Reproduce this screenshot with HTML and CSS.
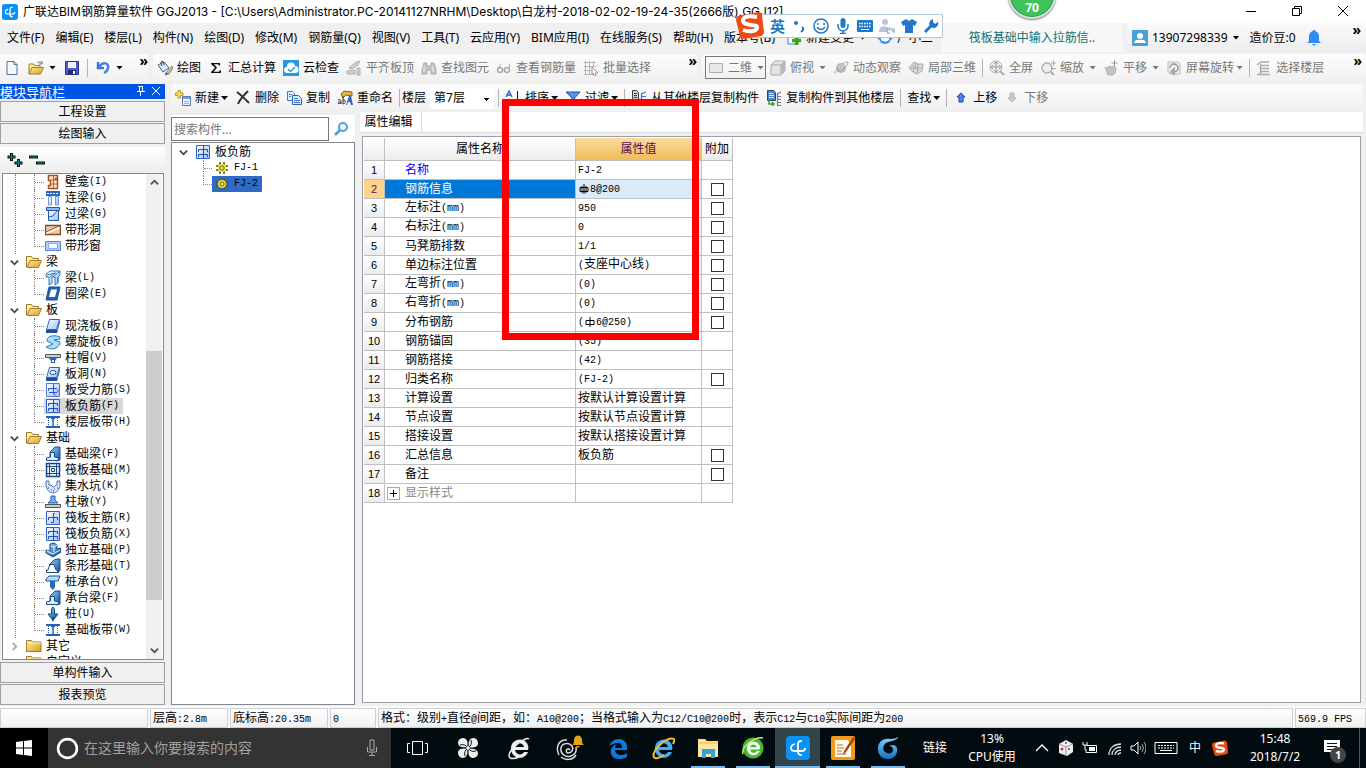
FILE: index.html
```html
<!DOCTYPE html>
<html lang="zh-CN">
<head>
<meta charset="utf-8">
<title>广联达BIM钢筋算量软件 GGJ2013</title>
<link rel="stylesheet" href="styles.css">
</head>
<body>
<svg class="defs" aria-hidden="true">
  <defs>
    <linearGradient id="gold" x1="0" y1="0" x2="1" y2="1"><stop offset="0" stop-color="#fff0a0"/><stop offset="1" stop-color="#d89a20"/></linearGradient>
    <linearGradient id="sky" x1="0" y1="0" x2="1" y2="1"><stop offset="0" stop-color="#ffffff"/><stop offset="1" stop-color="#9dc0ff"/></linearGradient>
    <linearGradient id="steel" x1="0" y1="0" x2="1" y2="1"><stop offset="0" stop-color="#9ed6f8"/><stop offset="1" stop-color="#0d4a96"/></linearGradient>
    <linearGradient id="ie" x1="0" y1="0" x2="0" y2="1"><stop offset="0" stop-color="#7fd2fb"/><stop offset="1" stop-color="#1273c4"/></linearGradient>
  </defs>
  <symbol id="app" viewBox="0 0 24 24"><rect width="24" height="24" rx="4" fill="#0a91f5"/><path d="M16 5h-1q-3 0-3 3v8q0 3 4 3M9 8q-4 1-4 4t4 3h7q3 0 3-3" fill="none" stroke="#fff" stroke-width="1.800"/></symbol>
  <symbol id="new" viewBox="0 0 16 16"><path d="M3 1.500h7l3 3v10H3z" fill="#f4f9ff" stroke="#53719c"/><path d="M10 1.500v3h3" fill="#c5d8ef" stroke="#53719c"/></symbol>
  <symbol id="open" viewBox="0 0 16 16"><path d="M1 14V4h5l1 1.500h5V8" fill="#ffe9a0" stroke="#a47a27"/><path d="M1 14 4 7.500h11.500L12.500 14z" fill="url(#gold)" stroke="#a47a27"/><path d="M9 3c2-2 4-1 5 1m0-3v3h-3" fill="none" stroke="#52739f"/></symbol>
  <symbol id="save" viewBox="0 0 16 16"><path d="M1.500 1.500h13v13h-13z" fill="#4b5fd0" stroke="#26328c"/><path d="M4 2h8v6H4z" fill="#f0f3ff"/><path d="M4 10h8v4.500H4z" fill="#222c6e"/><path d="M9 11h2v3H9z" fill="#fff"/></symbol>
  <symbol id="undo" viewBox="0 0 16 16"><path d="M3 2v6h6" fill="none" stroke="#3f76d6" stroke-width="2.500"/><path d="M4 7c4-6 10-4 9 1-.500 2.500-2 4-4 5" fill="none" stroke="#4b80df" stroke-width="2.500"/></symbol>
  <symbol id="paint" viewBox="0 0 16 16"><path d="M1 5 7 2l5 6-6 4z" fill="#dbe9fb" stroke="#415f88"/><path d="M5 6c-3-5 2-7 2-1" fill="none" stroke="#333"/><path d="m15 6-5 6-2 3 4-1 4-6z" fill="#e7bf58" stroke="#5b6d8e" stroke-width=".8"/><path d="m8 15 1-3 2 2z" fill="#2962b8"/></symbol>
  <symbol id="sigma" viewBox="0 0 16 16"><path d="M3 3h9v2.500h-1L10 4.200H6l3 3.500-3.500 4H11l1-1.500h1V13H3v-1l4-4.300L3 4z" fill="#111"/></symbol>
  <symbol id="cloudcheck" viewBox="0 0 16 16"><rect width="16" height="16" fill="#249ae4"/><path d="M4 13a3 3 0 0 1 0-6 4 4 0 0 1 8-1 3.500 3.500 0 0 1 0 7z" fill="#fff"/><path d="m5 9 2.500 2.500L12 7" fill="none" stroke="#249ae4" stroke-width="1.500"/></symbol>
  <symbol id="slab" viewBox="0 0 16 16"><path d="m3 8 7-6 4-1-2 4-6 4zM1 11l8-1v4H1zM11 8h3v7h-3z" fill="#cfcfcf" stroke="#b0b0b0"/></symbol>
  <symbol id="binoc" viewBox="0 0 16 16"><path d="M3 3h3v3h4V3h3l2 7v4h-5v-4H6v4H1v-4z" fill="#c6c6c6" stroke="#a9a9a9"/><path d="M3 6v6M12 6v6" stroke="#eee"/></symbol>
  <symbol id="glasses" viewBox="0 0 16 16"><circle cx="4" cy="10" r="2.500" fill="none" stroke="#aaa" stroke-width="1.500"/><circle cx="11" cy="10" r="2.500" fill="none" stroke="#aaa" stroke-width="1.500"/><path d="M1.500 10 5 4m8.500 6V4M6 10h3" fill="none" stroke="#aaa"/></symbol>
  <symbol id="batch" viewBox="0 0 16 16"><path d="M1 2.500h12M1 6.500h12M1 10.500h7M1 14.500h7M2.500 1v14M6.500 1v14M10.500 1v6" stroke="#b4b4b4" fill="none"/><path d="m9 7 6 6h-3l1 3h-2l-1-3-1 2z" fill="#fff" stroke="#999"/></symbol>
  <symbol id="rect" viewBox="0 0 16 16"><path d="M1.500 3.500h13v9h-13z" fill="#e8e8e8" stroke="#b0b0b0"/></symbol>
  <symbol id="cube" viewBox="0 0 16 16"><path d="M1 5 5 1h10v10l-4 4H1z" fill="#e4e4e4" stroke="#aaa"/><path d="M1 5h10v10M11 5l4-4" fill="none" stroke="#aaa"/><path d="m11 5 4-4v10l-4 4z" fill="#b9b9b9"/></symbol>
  <symbol id="orbit" viewBox="0 0 16 16"><circle cx="8" cy="8" r="5" fill="#b8b8b8"/><path d="M2 14C-1 12 13 0 15 2c1 2-6 9-11 10" fill="none" stroke="#a2a2a2"/><path d="m5 8 5-4m-3 6 5-5" stroke="#e6e6e6"/></symbol>
  <symbol id="local3d" viewBox="0 0 16 16"><path d="m1 8 5-6 4 2h5l-1 7-5 3-4-2z" fill="#dedede" stroke="#aaa"/><path d="m4 5 7 6M8 3l-3 9m5-8-1 10M2 8h12" fill="none" stroke="#aaa"/></symbol>
  <symbol id="full" viewBox="0 0 16 16"><circle cx="7" cy="7" r="6" fill="#efefef" stroke="#aaa"/><path d="M7 2v10M2 7h10M5 4l2-2 2 2M5 10l2 2 2-2M4 5 2 7l2 2m6-4 2 2-2 2" fill="none" stroke="#999"/><path d="m11 11 4 4" stroke="#aaa" stroke-width="2"/></symbol>
  <symbol id="zoomi" viewBox="0 0 16 16"><circle cx="7" cy="8" r="5" fill="#efefef" stroke="#b0b0b0" stroke-width="1.500"/><path d="m11 12 3 3" stroke="#aaa" stroke-width="2"/><path d="M11 3h5M13.500.500v5M12 8.500h4" stroke="#aaa"/></symbol>
  <symbol id="hand" viewBox="0 0 16 16"><path d="m2 7 3 2V6l3 1 3-1 2 2-1 5-2 2H5z" fill="#c3c3c3" stroke="#b2b2b2"/><path d="M11.500 0v6M8.500 3h6" stroke="#999"/></symbol>
  <symbol id="rotate" viewBox="0 0 16 16"><path d="M2 2h10l2 2v10H4l-2-2z" fill="#ececec" stroke="#bbb"/><path d="M4 8a4 4 0 1 1 4 4m0-3v5l-3-2z" fill="none" stroke="#999" stroke-width="1.500"/></symbol>
  <symbol id="floors" viewBox="0 0 16 16"><path d="m1 5 4-3h8M4 5.500h9M4 8.500h9M4 11.500h9M1 14.500h13M4.500 4v10" fill="none" stroke="#aaa" stroke-width="1.300"/></symbol>
  <symbol id="create" viewBox="0 0 16 16"><path d="M7.500 6.500h8v9h-8z" fill="#edf4ff" stroke="#5579b4"/><path d="M8 7h7v2H8z" fill="#6e9de0"/><path d="M9 11.500h5m-5 2h5" stroke="#91b1e1"/><path d="M3 .500h2.500v2.500H8v2.500H5.500V8H3V5.500H.500V3H3z" fill="#ffe45c" stroke="#a98414" stroke-width=".8"/></symbol>
  <symbol id="del" viewBox="0 0 16 16"><path d="M2 2c4 3 8 7 12 11M13 1C9 5 5 9 3 14" fill="none" stroke="#333" stroke-width="2"/></symbol>
  <symbol id="copy" viewBox="0 0 16 16"><path d="M1.500 1.500h5l2 2v7h-7z" fill="#e9f1ff" stroke="#4776bd"/><path d="M6.500 5.500h6l3 3v6h-9z" fill="#d9e7ff" stroke="#2d61af"/><path d="M3 4.500h3M3 6.500h2m3 2h4m-4 2h6m-6 2h6" stroke="#4a7bc1"/></symbol>
  <symbol id="rename" viewBox="0 0 16 16"><path d="M4 4 7 1l8 1v4L9 5 6 8z" fill="#e8b63a" stroke="#7d6226"/><path d="M9 15l3-9h2l2 9h-2l-1-3h-2l-1 3z" fill="#3265bd"/><path d="M1 10c3-1 3 0 3 4M4 12c-4-1-4 3 0 1m2-7v8c3 0 3-5 0-4" fill="none" stroke="#333"/></symbol>
  <symbol id="sort" viewBox="0 0 16 16"><path d="m1 7 3-6 3 6M2 5h4" fill="none" stroke="#315cad" stroke-width="1.300"/><path d="M2 10h4l-4 5h5" fill="none" stroke="#a33"/><path d="M12.500 1v13m-2-3 2 3 2-3" fill="none" stroke="#111"/></symbol>
  <symbol id="filter" viewBox="0 0 16 16"><path d="M1 2h14L9.500 8v6L7 12V8z" fill="#5d90e5" stroke="#234fa2"/></symbol>
  <symbol id="copyfrom" viewBox="0 0 16 16"><path d="M1.500.500h4l2 2v7h-6z" fill="#cdd1d7" stroke="#444"/><path d="M3 3.500h3M3 5.500h3M3 7.500h3" stroke="#444"/><path d="m10 4 5-2m-5 4.500h5m-5 3h5m-5 3h5m-5 3h5M10.500 3v12" fill="none" stroke="#3c74c9" stroke-width="1.200"/><path d="M3 12.500h5m-2-2 2 2-2 2" stroke="#2c8b36" stroke-width="1.500" fill="none"/></symbol>
  <symbol id="copyto" viewBox="0 0 16 16"><path d="M1.500.500h6l2 2v8h-8z" fill="#4b86d4" stroke="#3d4450"/><path d="M3 3.500h4M3 5.500h5M3 7.500h5" stroke="#dfe9f7"/><path d="m11 4 4-2m-4 4.500h4m-4 3h4m-4 3h4m-4 3h4M11.500 3v12" fill="none" stroke="#777" stroke-width="1.200"/><path d="M3 10v4h5m-2-2 2 2-2 2" stroke="#2ca036" stroke-width="1.500" fill="none"/></symbol>
  <symbol id="up" viewBox="0 0 16 16"><path d="m8 3 4 4h-2v5H6V7H4z" fill="#4f83ee" stroke="#1c3fa4"/></symbol>
  <symbol id="down" viewBox="0 0 16 16"><path d="m8 12 4-4h-2V3H6v5H4z" fill="#c9c9c9" stroke="#b0b0b0"/></symbol>
  <symbol id="addchg" viewBox="0 0 16 16"><path d="M2 2h10v12H2z" fill="#fff" stroke="#3383c8"/><path d="M10.500 6v9M6 10.500h9" stroke="#44a51c" stroke-width="3.500"/></symbol>
  <symbol id="robot" viewBox="0 0 16 16"><circle cx="8" cy="8" r="6" fill="#3193ed"/><path d="M4 7h8v3q-4 3-8 0z" fill="#fff"/><circle cx="2" cy="8" r="1.500" fill="#3193ed"/><circle cx="14" cy="8" r="1.500" fill="#3193ed"/></symbol>
  <symbol id="user" viewBox="0 0 16 16"><rect width="16" height="16" rx="1" fill="#4aa0d5"/><circle cx="8" cy="6" r="3" fill="#fff"/><path d="M2 13q1-4 6-3 5-1 6 3z" fill="#fff"/></symbol>
  <symbol id="bell" viewBox="0 0 16 16"><path d="M3 11V6a5 5 0 0 1 10 0v5l2 2H1zM6 14h4l-2 2zM7 0h2v2H7z" fill="#2c8ef5"/></symbol>
  <symbol id="find" viewBox="0 0 16 16"><circle cx="9" cy="6" r="4" fill="#f3faff" stroke="#4e9fdb" stroke-width="2"/><path d="m6 9-5 5" stroke="#4e9fdb" stroke-width="2.500"/></symbol>
  <symbol id="folder" viewBox="0 0 16 16"><path d="M.500 13V2.500h5l1 2h6v3" fill="#fff0b0" stroke="#a87b28"/><path d="m1 13.500 3-7h11.500l-3 7z" fill="url(#gold)" stroke="#a87b28"/></symbol>
  <symbol id="folderc" viewBox="0 0 16 16"><path d="M.500 13.500v-11h5l1 1.500h8.500v9.500z" fill="url(#gold)" stroke="#a87b28"/><path d="M1 5h14" stroke="#fff2bd"/></symbol>
  <symbol id="t-niche" viewBox="0 0 16 16"><path d="M3.500 1.500h9v3h-2v1h2v9h-9v-3h2v-5h-2z" fill="#ffe5cf" stroke="#a5531a" stroke-width="1.500"/><path d="M8.500 2v12M6 6h6M6 10h6" fill="none" stroke="#bd6325"/></symbol>
  <symbol id="t-tie" viewBox="0 0 16 16"><path d="M1 1h14v5H1z" fill="#2c67bd"/><path d="M2 3.500h2m1 0h2m1 0h2m1 0h2" stroke="#fff"/><path d="M3.500 6.500h3V15h-3zm7 0h3V15h-3z" fill="url(#sky)" stroke="#6d9ae0"/></symbol>
  <symbol id="t-lintel" viewBox="0 0 16 16"><path d="M1.500 1.500h13v3h-13z" fill="#92b9f1" stroke="#1f59aa"/><path d="M3.500 4.500h10v10h-10z" fill="url(#sky)" stroke="#1f59aa"/><path d="m4 11 4-1 4-5" fill="none" stroke="#1f59aa"/></symbol>
  <symbol id="t-hole" viewBox="0 0 16 16"><path d="M.500 3.500h15v9H.500z" fill="#efc8a1" stroke="#8a491c" stroke-width="1.300"/><path d="m1 10 13-6v3L1 12z" fill="#fff"/><path d="m1 10 13-6" stroke="#8a491c"/></symbol>
  <symbol id="t-window" viewBox="0 0 16 16"><path d="M.500 3.500h15v9H.500z" fill="#b7caff" stroke="#5a83da"/><path d="M3.500 5.500h9v5h-9z" fill="#fff" stroke="#8fa9ee"/></symbol>
  <symbol id="t-beam" viewBox="0 0 16 16"><path d="M1 4 5 1h10v4l-2 2v6l-3 2V7H7v6l-3 2V7L1 7z" fill="url(#sky)" stroke="#287bb7"/><path d="m2 5 9-2m-6 4 5-4m-2 4 6-5m-1 5v5" stroke="#287bb7"/></symbol>
  <symbol id="t-ring" viewBox="0 0 16 16"><path d="M4 1h11l-3 13H1z" fill="#2461b7" stroke="#174b9b"/><path d="M6 3.500h6L10 11H4z" fill="#fff"/></symbol>
  <symbol id="t-slab" viewBox="0 0 16 16"><path d="M4.500 1.500h10l-3 10h-10z" fill="url(#sky)" stroke="#2865bd"/><path d="M1 12h11v3H1zM12 12l3-11v3l-3 11z" fill="#174fa6"/></symbol>
  <symbol id="t-spiral" viewBox="0 0 16 16"><path d="M15 3C8 0 1 3 2 7l6 3-7 3c6 4 14 1 14-5L9 6l6-1z" fill="#a9def9" stroke="#277ec2"/></symbol>
  <symbol id="t-cap" viewBox="0 0 16 16"><path d="M.500 4.500h15v3H.500z" fill="#ccc" stroke="#555"/><path d="M4 8h8l-2 3v2H6v-2z" fill="#2365b7"/><path d="M7 10h2v2H7z" fill="#fff"/></symbol>
  <symbol id="t-slabhole" viewBox="0 0 16 16"><path d="M4.500 1.500h10l-3 10h-10z" fill="url(#sky)" stroke="#2865bd"/><path d="M1 12h11v3H1zM12 12l3-11v3l-3 11z" fill="#174fa6"/><ellipse cx="8" cy="6.500" rx="3" ry="2" fill="#fff" stroke="#174fa6"/></symbol>
  <symbol id="t-force" viewBox="0 0 16 16"><path d="M1.500 1.500h13v13h-13z" fill="url(#sky)" stroke="#4a78dc"/><path d="M8.500 2v9q0 2 2 2M3.500 9V6.500H12M4 10.500h8q1 0 1-3" fill="none" stroke="#2a57bd"/></symbol>
  <symbol id="t-neg" viewBox="0 0 16 16"><path d="M1.500 1.500h13v13h-13z" fill="url(#sky)" stroke="#2d5fd0"/><path d="M8.500 2v12M3.500 8V5.500h9V8M3.500 13v-2.500h9V13" fill="none" stroke="#214ead"/></symbol>
  <symbol id="t-strip" viewBox="0 0 16 16"><path d="M1 2h14v2H1zM1 12h14v2H1z" fill="#2760bc"/><path d="M8 3v10M6 4.500h4" stroke="#2760bc" stroke-width="1.500"/><path d="M3.500 4v8M12.500 4v8" stroke="#2760bc" stroke-dasharray="1 1"/></symbol>
  <symbol id="t-fbeam" viewBox="0 0 16 16"><path d="M5 12V6l5-5h5v13l-3 1z" fill="url(#steel)" stroke="#174e8d"/><path d="M1.500 14.500V12l4-1V6.500h4V11l4 1v2.500z" fill="#dcedff" stroke="#174e8d"/></symbol>
  <symbol id="t-raft" viewBox="0 0 16 16"><path d="M1.500 1.500h13v13h-13z" fill="#edf4ff" stroke="#174984" stroke-width="1.500"/><path d="M4.500 1v14M11.500 1v14M1 4.500h14M1 11.500h14M6.500 6.500h3v3h-3z" fill="none" stroke="#174984"/></symbol>
  <symbol id="t-pit" viewBox="0 0 16 16"><path d="M1 3h3v4h2l2 2h1l2-2h1V3h3v5q-2 7-7 7T1 8z" fill="#d6e6ff" stroke="#4777bc"/><path d="M3 10h1m2 2h1m2-1h1m2-1h1m-5 3h1" stroke="#164997"/></symbol>
  <symbol id="t-pier" viewBox="0 0 16 16"><path d="M6 2h4v4l3 3H3l3-3z" fill="#78aee9" stroke="#2162a8"/><path d="M.500 10.500h15v3H.500z" fill="#ccc" stroke="#555"/></symbol>
  <symbol id="t-main" viewBox="0 0 16 16"><path d="M1.500 1.500h13v13h-13z" fill="url(#sky)" stroke="#2d5fd0"/><path d="M10 3.500H8.500v9H6M3.500 10V7.500h9V10" fill="none" stroke="#214ead"/></symbol>
  <symbol id="t-iso" viewBox="0 0 16 16"><path d="m1 8 4 1V2l4-1 3 2v4l4-1v4l-8 5-7-4z" fill="url(#steel)" stroke="#164e89"/><path d="m2 9 6 3 7-4M6 4l3 1v5M9 5l3-2" fill="none" stroke="#eff8ff"/></symbol>
  <symbol id="t-bar" viewBox="0 0 16 16"><path d="m4 7 5-5 3-1h3v11l-2 3z" fill="url(#steel)" stroke="#164e89"/><path d="M1.500 14.500V12H3l2-5.500h4l2 5.500h1.500v2.500z" fill="#fff" stroke="#164e89"/></symbol>
  <symbol id="t-pilecap" viewBox="0 0 16 16"><path d="m1 5 3-3h11l-2 5H1z" fill="#b9dafa" stroke="#164e89"/><path d="M5 7h5v6l-2 3-3-3z" fill="#246ab8"/></symbol>
  <symbol id="t-pile" viewBox="0 0 16 16"><path d="M8 1 6.500 3v5H3l3 4h4l3-4H9.500V3z" fill="url(#steel)" stroke="#164e89"/><path d="m6 12 2 4 2-4z" fill="#164e89"/></symbol>
  <symbol id="gear" viewBox="0 0 12 12"><path d="M4 0v12M8 0v12M0 4h12M0 8h12" stroke="#55520a" stroke-width="1.500"/><circle cx="6" cy="6" r="4" fill="#f5ed28"/><path d="M6 3v6M3 6h6M4 4l4 4M8 4 4 8" stroke="#6d6810"/><circle cx="6" cy="6" r="1" fill="#fff"/></symbol>
  <symbol id="e" viewBox="0 0 24 24"><path d="M3 12C4 6 8 3 13 3c6 0 9 5 8 11H9c0 3 3 5 6 5 2 0 4-.600 6-2v4c-2 1.500-5 2-8 2-6 0-9-4-8-9 .500-3 3-5 6-6-1 1-2 2-2 4h7c0-3-1-5-4-5-4 0-7 2-9 3z" fill="#0f79d7"/></symbol>
  <symbol id="ering" viewBox="0 0 24 24"><path d="M21 14H8c1 5 7 6 9 2h4c-3 8-15 8-17-2C3 4 14 1 19 6c2 2 3 5 2 8zM8 11h9c-1-5-8-5-9 0z" fill="currentColor"/></symbol>
  <symbol id="sogou" viewBox="0 0 28 28"><path d="m2 5 20-4q3 0 4 3l2 17q0 3-3 4L8 28q-3 0-4-3L0 9q0-3 2-4z" fill="#ef4b16"/><path d="M21 6C9 4 7 7 7 10c1 6 15 2 14 7-1 4-9 4-14 2" fill="none" stroke="#fff" stroke-width="4"/></symbol>
  <symbol id="kbd" viewBox="0 0 24 16"><path d="M1 2.500h22v11H1z" fill="none" stroke="currentColor"/><path d="M4 5.500h2m1 0h2m1 0h2m1 0h2m1 0h2m1 0h1M4 8h2m1 0h2m1 0h2m1 0h2m1 0h2m1 0h1M6 10.500h12" stroke="currentColor"/></symbol>
</svg>

<header class="title-bar">
  <svg class="i16"><use href="#app"/></svg>
  <h1>广联达BIM钢筋算量软件 GGJ2013 - [C:\Users\Administrator.PC-20141127NRHM\Desktop\白龙村-2018-02-02-19-24-35(2666版).GGJ12]</h1>
  <div class="win-controls">
    <button aria-label="最小化"><svg viewBox="0 0 10 10"><path d="M0 5.500h10"/></svg></button>
    <button aria-label="还原"><svg viewBox="0 0 10 10"><path d="M.500 2.500h7v7h-7zM2.500 2.500v-2h7v7h-2"/></svg></button>
    <button aria-label="关闭"><svg viewBox="0 0 10 10"><path d="m0 0 10 10M10 0 0 10"/></svg></button>
  </div>
</header>

<div class="menu-row">
  <nav class="menu">
    <button>文件(F)</button><button>编辑(E)</button><button>楼层(L)</button><button>构件(N)</button><button>绘图(D)</button><button>修改(M)</button><button>钢筋量(Q)</button><button>视图(V)</button><button>工具(T)</button><button>云应用(Y)</button><button>BIM应用(I)</button><button>在线服务(S)</button><button>帮助(H)</button><button>版本号(B)</button>
    <button class="tool"><svg class="i16"><use href="#addchg"/></svg>新建变更<span class="arr"></span></button>
    <button class="tool"><svg class="i16"><use href="#robot"/></svg>广小二</button>
  </nav>
  <a class="tip" href="#">筏板基础中输入拉筋信..</a>
  <div class="account">
    <button class="tool"><svg class="i16"><use href="#user"/></svg>13907298339<span class="arr"></span></button>
    <span>造价豆:0</span>
    <button class="tool" aria-label="通知"><svg class="i16"><use href="#bell"/></svg></button>
    <span class="more">»</span>
  </div>
</div>

<div class="bars">
  <div class="bar bar-file">
    <button class="tool" aria-label="新建"><svg class="i16"><use href="#new"/></svg></button>
    <button class="tool" aria-label="打开"><svg class="i16"><use href="#open"/></svg><span class="arr"></span></button>
    <button class="tool" aria-label="保存"><svg class="i16"><use href="#save"/></svg></button>
    <span class="sep"></span>
    <button class="tool" aria-label="撤销"><svg class="i16"><use href="#undo"/></svg><span class="arr"></span></button>
    <span class="more">»</span>
  </div>
  <div class="bar bar-draw">
    <button class="tool"><svg class="i16"><use href="#paint"/></svg>绘图</button>
    <button class="tool"><svg class="i16"><use href="#sigma"/></svg>汇总计算</button>
    <button class="tool"><svg class="i16"><use href="#cloudcheck"/></svg>云检查</button>
    <button class="tool off"><svg class="i16"><use href="#slab"/></svg>平齐板顶</button>
    <button class="tool off"><svg class="i16"><use href="#binoc"/></svg>查找图元</button>
    <button class="tool off"><svg class="i16"><use href="#glasses"/></svg>查看钢筋量</button>
    <button class="tool off"><svg class="i16"><use href="#batch"/></svg>批量选择</button>
    <span class="more">»</span>
  </div>
  <div class="bar bar-view">
    <button class="tool off boxed"><svg class="i16"><use href="#rect"/></svg>二维<span class="arr"></span></button>
    <button class="tool off"><svg class="i16"><use href="#cube"/></svg>俯视<span class="arr"></span></button>
    <button class="tool off"><svg class="i16"><use href="#orbit"/></svg>动态观察</button>
    <button class="tool off"><svg class="i16"><use href="#local3d"/></svg>局部三维</button>
    <span class="sep"></span>
    <button class="tool off"><svg class="i16"><use href="#full"/></svg>全屏</button>
    <button class="tool off"><svg class="i16"><use href="#zoomi"/></svg>缩放<span class="arr"></span></button>
    <button class="tool off"><svg class="i16"><use href="#hand"/></svg>平移<span class="arr"></span></button>
    <button class="tool off tight"><svg class="i16"><use href="#rotate"/></svg>屏幕旋转<span class="arr"></span></button>
    <span class="sep"></span>
    <button class="tool off"><svg class="i16"><use href="#floors"/></svg>选择楼层</button>
    <span class="more">»</span>
  </div>
</div>

<main class="work">
  <aside class="nav">
    <h2>模块导航栏
      <svg viewBox="0 0 26 13"><path d="M3 1.500h5M4.500 1v5M7.500 1v5M2 6.500h8M5.500 7v4M17 2l8 8M25 2l-8 8"/></svg>
    </h2>
    <button class="nav-btn">工程设置</button>
    <button class="nav-btn">绘图输入</button>
    <div class="nav-tools">
      <button aria-label="展开"><svg viewBox="0 0 16 16"><path d="M4.500 1v8M.500 5h8M11.500 7v8M7.500 11h8" stroke="#111" stroke-width="3"/><path d="M4.500 2v6M1.500 5h6M11.500 8v6M8.500 11h6" stroke="#0b8f87"/></svg></button>
      <button aria-label="折叠"><svg viewBox="0 0 16 16"><path d="M0 5h9M7 11h9" stroke="#111" stroke-width="3"/><path d="M1 5h7M8 11h7" stroke="#0b8f87"/></svg></button>
    </div>
    <div class="tree-box">
      <div class="tree">
        <ul class="leaves">
          <li><button><svg class="i16"><use href="#t-niche"/></svg>壁龛<i>(I)</i></button></li>
          <li><button><svg class="i16"><use href="#t-tie"/></svg>连梁<i>(G)</i></button></li>
          <li><button><svg class="i16"><use href="#t-lintel"/></svg>过梁<i>(G)</i></button></li>
          <li><button><svg class="i16"><use href="#t-hole"/></svg>带形洞</button></li>
          <li><button><svg class="i16"><use href="#t-window"/></svg>带形窗</button></li>
        </ul>
        <button class="group"><svg class="chev" viewBox="0 0 10 10"><path d="m1 3 4 4 4-4"/></svg><svg class="i16"><use href="#folder"/></svg>梁</button>
        <ul class="leaves">
          <li><button><svg class="i16"><use href="#t-beam"/></svg>梁<i>(L)</i></button></li>
          <li><button><svg class="i16"><use href="#t-ring"/></svg>圈梁<i>(E)</i></button></li>
        </ul>
        <button class="group"><svg class="chev" viewBox="0 0 10 10"><path d="m1 3 4 4 4-4"/></svg><svg class="i16"><use href="#folder"/></svg>板</button>
        <ul class="leaves">
          <li><button><svg class="i16"><use href="#t-slab"/></svg>现浇板<i>(B)</i></button></li>
          <li><button><svg class="i16"><use href="#t-spiral"/></svg>螺旋板<i>(B)</i></button></li>
          <li><button><svg class="i16"><use href="#t-cap"/></svg>柱帽<i>(V)</i></button></li>
          <li><button><svg class="i16"><use href="#t-slabhole"/></svg>板洞<i>(N)</i></button></li>
          <li><button><svg class="i16"><use href="#t-force"/></svg>板受力筋<i>(S)</i></button></li>
          <li><button class="current"><svg class="i16"><use href="#t-neg"/></svg>板负筋<i>(F)</i></button></li>
          <li><button><svg class="i16"><use href="#t-strip"/></svg>楼层板带<i>(H)</i></button></li>
        </ul>
        <button class="group"><svg class="chev" viewBox="0 0 10 10"><path d="m1 3 4 4 4-4"/></svg><svg class="i16"><use href="#folder"/></svg>基础</button>
        <ul class="leaves">
          <li><button><svg class="i16"><use href="#t-fbeam"/></svg>基础梁<i>(F)</i></button></li>
          <li><button><svg class="i16"><use href="#t-raft"/></svg>筏板基础<i>(M)</i></button></li>
          <li><button><svg class="i16"><use href="#t-pit"/></svg>集水坑<i>(K)</i></button></li>
          <li><button><svg class="i16"><use href="#t-pier"/></svg>柱墩<i>(Y)</i></button></li>
          <li><button><svg class="i16"><use href="#t-main"/></svg>筏板主筋<i>(R)</i></button></li>
          <li><button><svg class="i16"><use href="#t-neg"/></svg>筏板负筋<i>(X)</i></button></li>
          <li><button><svg class="i16"><use href="#t-iso"/></svg>独立基础<i>(P)</i></button></li>
          <li><button><svg class="i16"><use href="#t-bar"/></svg>条形基础<i>(T)</i></button></li>
          <li><button><svg class="i16"><use href="#t-pilecap"/></svg>桩承台<i>(V)</i></button></li>
          <li><button><svg class="i16"><use href="#t-fbeam"/></svg>承台梁<i>(F)</i></button></li>
          <li><button><svg class="i16"><use href="#t-pile"/></svg>桩<i>(U)</i></button></li>
          <li><button><svg class="i16"><use href="#t-strip"/></svg>基础板带<i>(W)</i></button></li>
        </ul>
        <button class="group closed"><svg class="chev" viewBox="0 0 10 10"><path d="m3 1 4 4-4 4"/></svg><svg class="i16"><use href="#folderc"/></svg>其它</button>
        <button class="group closed"><svg class="chev" viewBox="0 0 10 10"><path d="m3 1 4 4-4 4"/></svg><svg class="i16"><use href="#folderc"/></svg>自定义</button>
      </div>
      <div class="scroll">
        <svg viewBox="0 0 10 10"><path d="m1 7 4-4 4 4"/></svg>
        <div class="track"><div class="thumb"></div></div>
        <svg viewBox="0 0 10 10"><path d="m1 3 4 4 4-4"/></svg>
      </div>
    </div>
    <button class="nav-btn">单构件输入</button>
    <button class="nav-btn">报表预览</button>
  </aside>

  <section class="editor">
    <div class="bar bar-comp">
      <button class="tool tight"><svg class="i16"><use href="#create"/></svg>新建<span class="arr"></span></button>
      <button class="tool"><svg class="i16"><use href="#del"/></svg>删除</button>
      <button class="tool"><svg class="i16"><use href="#copy"/></svg>复制</button>
      <button class="tool"><svg class="i16"><use href="#rename"/></svg>重命名</button>
      <span class="sep"></span>
      <label class="floor">楼层
        <select><option>第7层</option></select>
      </label>
      <span class="sep"></span>
      <button class="tool tight"><svg class="i16"><use href="#sort"/></svg>排序<span class="arr"></span></button>
      <button class="tool tight"><svg class="i16"><use href="#filter"/></svg>过滤<span class="arr"></span></button>
      <span class="sep"></span>
      <button class="tool"><svg class="i16"><use href="#copyfrom"/></svg>从其他楼层复制构件</button>
      <button class="tool"><svg class="i16"><use href="#copyto"/></svg>复制构件到其他楼层</button>
      <span class="sep"></span>
      <button class="tool tight">查找<span class="arr"></span></button>
      <span class="sep"></span>
      <button class="tool"><svg class="i16"><use href="#up"/></svg>上移</button>
      <button class="tool off"><svg class="i16"><use href="#down"/></svg>下移</button>
    </div>
    <div class="panes">
      <div class="components">
        <div class="search">
          <input type="text" placeholder="搜索构件..." aria-label="搜索构件">
          <button aria-label="搜索"><svg class="i16"><use href="#find"/></svg></button>
        </div>
        <div class="comp-tree">
          <button class="group"><svg class="chev" viewBox="0 0 10 10"><path d="m1 3 4 4 4-4"/></svg><svg class="i16"><use href="#t-neg"/></svg>板负筋</button>
          <ul>
            <li><button><svg class="i12"><use href="#gear"/></svg><i>FJ-1</i></button></li>
            <li><button class="picked"><svg class="i12"><use href="#gear"/></svg><i>FJ-2</i></button></li>
          </ul>
        </div>
      </div>
      <div class="props">
        <div class="tabs"><button class="tab">属性编辑</button></div>
        <div class="sheet">
          <table>
            <colgroup><col class="c-num"><col class="c-name"><col class="c-val"><col class="c-add"></colgroup>
            <thead><tr><th></th><th>属性名称</th><th class="hot">属性值</th><th>附加</th></tr></thead>
            <tbody>
              <tr><th>1</th><td class="key">名称</td><td><i>FJ-2</i></td><td></td></tr>
              <tr class="sel"><th>2</th><td>钢筋信息</td><td><svg viewBox="0 0 10 10"><path d="M1 3.500h8v4H1zM5 0v10M3 2v7M7 2v7"/></svg><i>8@200</i></td><td><input type="checkbox" aria-label="钢筋信息"></td></tr>
              <tr><th>3</th><td>左标注<i>(mm)</i></td><td><i>950</i></td><td><input type="checkbox" aria-label="左标注"></td></tr>
              <tr><th>4</th><td>右标注<i>(mm)</i></td><td><i>0</i></td><td><input type="checkbox" aria-label="右标注"></td></tr>
              <tr><th>5</th><td>马凳筋排数</td><td><i>1/1</i></td><td><input type="checkbox" aria-label="马凳筋排数"></td></tr>
              <tr><th>6</th><td>单边标注位置</td><td><i>(</i>支座中心线<i>)</i></td><td><input type="checkbox" aria-label="单边标注位置"></td></tr>
              <tr><th>7</th><td>左弯折<i>(mm)</i></td><td><i>(0)</i></td><td><input type="checkbox" aria-label="左弯折"></td></tr>
              <tr><th>8</th><td>右弯折<i>(mm)</i></td><td><i>(0)</i></td><td><input type="checkbox" aria-label="右弯折"></td></tr>
              <tr><th>9</th><td>分布钢筋</td><td><i>(</i><svg viewBox="0 0 10 10"><path d="M1 3.500h8v4H1zM5 0v10"/></svg><i>6@250)</i></td><td><input type="checkbox" aria-label="分布钢筋"></td></tr>
              <tr><th>10</th><td>钢筋锚固</td><td><i>(35)</i></td><td></td></tr>
              <tr><th>11</th><td>钢筋搭接</td><td><i>(42)</i></td><td></td></tr>
              <tr><th>12</th><td>归类名称</td><td><i>(FJ-2)</i></td><td><input type="checkbox" aria-label="归类名称"></td></tr>
              <tr><th>13</th><td>计算设置</td><td>按默认计算设置计算</td><td></td></tr>
              <tr><th>14</th><td>节点设置</td><td>按默认节点设置计算</td><td></td></tr>
              <tr><th>15</th><td>搭接设置</td><td>按默认搭接设置计算</td><td></td></tr>
              <tr><th>16</th><td>汇总信息</td><td>板负筋</td><td><input type="checkbox" aria-label="汇总信息"></td></tr>
              <tr><th>17</th><td>备注</td><td></td><td><input type="checkbox" aria-label="备注"></td></tr>
              <tr class="style-row"><th>18</th><td><button aria-label="展开显示样式"><svg viewBox="0 0 7 7"><path d="M0 3.500h7M3.500 0v7"/></svg></button>显示样式</td><td></td><td></td></tr>
            </tbody>
          </table>
        </div>
      </div>
    </div>
  </section>
</main>

<footer class="status">
  <span class="s-a"></span>
  <span class="s-b">层高<i>:2.8m</i></span>
  <span class="s-c">底标高<i>:20.35m</i></span>
  <span class="s-d"><i>0</i></span>
  <span class="s-e">格式：级别<i>+</i>直径<i>@</i>间距，如：<i>A10@200</i>；当格式输入为<i>C12/C10@200</i>时，表示<i>C12</i>与<i>C10</i>实际间距为<i>200</i></span>
  <span class="s-f"><i>569.9 FPS</i></span>
</footer>

<div class="taskbar">
  <button class="start" aria-label="开始"><svg viewBox="0 0 16 16"><path d="m0 2 7-1v6.500H0zM8 1l8-1v7.500H8zM0 8.500h7V15l-7-1zM8 8.500h8V16l-8-1z" fill="#fff"/></svg></button>
  <label class="cortana">
    <svg class="ring" viewBox="0 0 22 22"><circle cx="11" cy="11" r="9" fill="none" stroke="#fff" stroke-width="2.500"/></svg>
    <input type="text" placeholder="在这里输入你要搜索的内容">
    <svg class="mic" viewBox="0 0 12 18"><path d="M4 1h4v10H4zM1.500 8v5h9V8M6 13v3M3 16.500h6" fill="none" stroke="#aaa"/></svg>
  </label>
  <button class="slot" aria-label="任务视图"><svg viewBox="0 0 24 24"><path d="M7.500 5.500h10v13h-10zM5 7.500H2.500v9H5M20 7.500h2.500v9H20" fill="none" stroke="#fff"/></svg></button>
  <button class="slot" aria-label="风扇"><svg viewBox="0 0 24 24"><g fill="#eee"><path d="M11 11C2 13 0 6 4 3c5-3 9 1 7 8z"/><path d="M13 11C11 2 18 0 21 4c3 5-1 9-8 7z"/><path d="M13 13c9-2 11 5 7 8-5 3-9-1-7-8z"/><path d="M11 13c2 9-5 11-8 7-3-5 1-9 8-7z"/></g><circle cx="12" cy="12" r="2" fill="#eee"/><path d="M4 9c3-1 6 0 7 2M15 4c1 3 0 6-2 7M20 15c-3 1-6 0-7-2M9 20c-1-3 0-6 2-7" fill="none" stroke="#111"/></svg></button>
  <button class="slot pale" aria-label="浏览器"><svg viewBox="0 0 24 24"><use href="#ering"/><path d="M3 22C-2 16 18 0 22 3M3 22c3 1 7 0 9-1" fill="none" stroke="#eee" stroke-width="1.500"/></svg></button>
  <button class="slot" aria-label="提醒"><svg class="wide" viewBox="0 0 30 28"><path d="M15 16a2 2 0 1 0-2 3c4 0 6-4 4-7-3-4-10-3-11 2-1 6 5 10 10 8 4-1 6-5 5-9M4 21C0 13 4 5 12 6M6 23c5 4 12 3 15-2" fill="none" stroke="#ddd" stroke-width="1.500"/><path d="M17 11c2-1 2-3 2-5 0-6 8-6 8 0 0 2 0 4 2 5zM21 12h4l-2 2z" fill="#e5a416"/></svg></button>
  <button class="slot app" aria-label="Edge"><svg viewBox="0 0 24 24"><use href="#e"/></svg></button>
  <button class="slot app" aria-label="Internet Explorer"><svg viewBox="0 0 24 24"><g color="#48aaf0"><use href="#ering"/></g><path d="M4 22C-3 18 16-1 23 3c1 1 0 3-1 5M4 22c3 1 6-1 9-3" fill="none" stroke="#f0bb35" stroke-width="2"/></svg></button>
  <button class="slot app open" aria-label="资源管理器"><svg viewBox="0 0 24 24"><path d="M2 3h7l2 2h11v16H2z" fill="#ffe49a"/><path d="M2 6h20v2H2z" fill="#f8cf69"/><path d="M6 22v-9h13v9h-4v-4h-5v4z" fill="#2ea5df"/></svg></button>
  <button class="slot app open" aria-label="安全浏览器"><svg viewBox="0 0 24 24"><circle cx="12" cy="12" r="10.500" fill="#48b830"/><g color="#fff"><use href="#ering" x="3" y="3" width="18" height="18"/></g><path d="M2 18C0 10 15 0 22 2" fill="none" stroke="#c7ed75" stroke-width="1.500"/></svg></button>
  <button class="slot app open active" aria-label="广联达"><svg viewBox="0 0 24 24"><use href="#app"/></svg></button>
  <button class="slot app open" aria-label="记事"><svg viewBox="0 0 24 24"><rect width="24" height="24" rx="2" fill="#f39a19"/><path d="M4 4h12l4 3v14H4z" fill="#fff7e5"/><path d="M6 9h6m-6 3h7m-7 3h5m-5 3h9" stroke="#a87a35"/><path d="m22 1-9 14-1 4 3-3L24 3z" fill="#9c4a17"/></svg></button>
  <button class="slot app open" aria-label="广联达G"><svg viewBox="0 0 24 24"><path d="M22 1c-2 1-4 2-8 2C6 2 2 7 2 13c0 7 5 10 10 10 7 0 10-6 9-11-1-3-4-4-8-2 3 0 4 2 4 4 0 3-3 4-6 3-4-1-5-6-2-9 2-3 7-2 10-4 2-1 3-2 3-3z" fill="url(#ie)"/></svg></button>
  <div class="tray">
    <span class="link">链接</span>
    <div class="two-line"><span>13%</span><span>CPU使用</span></div>
    <svg class="i16" viewBox="0 0 16 16"><path d="m2 11 6-6 6 6" fill="none" stroke="#fff" stroke-width="1.300"/></svg>
    <svg class="i16" viewBox="0 0 16 16"><path d="M8 0 15 4v8l-6 4-8-3V4z" fill="#eee"/><path d="m1 4 7 3 7-3M8 7v8" stroke="#999" fill="none"/><circle cx="4" cy="9" r="1.500" fill="#d33"/><circle cx="11" cy="9" r="1" fill="#555"/><circle cx="8" cy="3" r="1" fill="#555"/></svg>
    <svg class="i16" viewBox="0 0 16 16"><path d="M5 5.500h9.500v7H4V9M1 2v3h4V2M3 5v5" fill="none" stroke="#fff"/><path d="M7 7h6v4H7z" fill="#fff"/></svg>
    <svg class="i16" viewBox="0 0 16 16"><path d="M3 15C3 8 8 4 15 4M6 15c0-5 4-8 9-8M9 15c0-3 3-5 6-5M12 15q0-2 3-2" fill="none" stroke="#ddd" stroke-width="1.300"/></svg>
    <svg class="i16" viewBox="0 0 16 16"><path d="M1 6h3l4-4v12l-4-4H1z" fill="none" stroke="#fff"/><path d="M10 6q2 2 0 4m2-6q3 4 0 8m2-10q4 6 0 12" fill="none" stroke="#aaa"/></svg>
    <svg class="kbd"><use href="#kbd"/></svg>
    <span class="ime">中</span>
    <svg class="i16"><use href="#sogou"/></svg>
    <div class="two-line clock"><span>15:48</span><span>2018/7/2</span></div>
    <div class="notes"><svg viewBox="0 0 16 16"><path d="M0 0h16v12h-6v4l-4-4H0z" fill="#fff"/><path d="M3 3.500h10M3 6.500h10M3 9.500h7" stroke="#111"/></svg><b>1</b></div>
  </div>
</div>

<div class="ime-bar">
  <svg class="logo"><use href="#sogou"/></svg>
  <b>英</b>
  <svg class="i16" viewBox="0 0 16 16"><circle cx="5" cy="5" r="2" fill="#2178c8"/><path d="M11 9q3 2-1 5" fill="none" stroke="#2178c8" stroke-width="2"/></svg>
  <svg class="i16" viewBox="0 0 16 16"><circle cx="8" cy="8" r="7" fill="none" stroke="#2178c8" stroke-width="1.500"/><path d="M4 9q4 5 8 0M5 5v2M11 5v2" fill="none" stroke="#2178c8" stroke-width="1.500"/></svg>
  <svg class="i16" viewBox="0 0 16 16"><rect x="5.500" y="0" width="5" height="10" rx="2.500" fill="#2178c8"/><path d="M3 6v2a5 5 0 0 0 10 0V6M8 13v3M5 15.500h6" fill="none" stroke="#2178c8" stroke-width="1.500"/></svg>
  <svg class="i16" viewBox="0 0 16 16"><rect y="2" width="16" height="12" rx="1" fill="#2178c8"/><path d="M2 5.500h12M2 8.500h12" stroke="#fff" stroke-width="1.300" stroke-dasharray="1.500 1"/><path d="M4 11.500h8" stroke="#fff"/></svg>
  <svg class="i16" viewBox="0 0 16 16"><circle cx="6" cy="4" r="3" fill="#b9c6d6"/><path d="M0 14q0-6 6-6l3 2v4z" fill="#b9c6d6"/><path d="M8 10h3v2H8v3h3m2-5v3h3m-1-3v5" fill="none" stroke="#8fa2b8"/></svg>
  <svg class="i16" viewBox="0 0 16 16"><path d="m5 1 3 2 3-2 5 3-2 4-2-1v8H4V7L2 8 0 4z" fill="#2178c8"/></svg>
  <svg class="i16" viewBox="0 0 16 16"><path d="m2 14 8-8" stroke="#2178c8" stroke-width="3"/><path d="M15 4a4.500 4.500 0 1 1-5-3v3l2 2z" fill="#2178c8"/></svg>
</div>
<div class="ball">70</div>
<div class="mark"></div>
</body>
</html>
```

FILE: styles.css
```css
* { box-sizing: border-box; }

body {
  position: relative;
  display: flex;
  flex-direction: column;
  height: 100vh;
  margin: 0;
  overflow: hidden;
  background: #f0f0f0;
  color: #000;
  font: 12px/16px "Noto Sans", "Noto Sans CJK SC", sans-serif;
  white-space: nowrap;
}

button, input, select {
  margin: 0;
  padding: 0;
  border: 0;
  background: none;
  color: inherit;
  font: inherit;
}

ul { margin: 0; padding: 0; list-style: none; }
i { font: 10px/16px "Liberation Mono", monospace; }
.defs { width: 0; height: 0; flex: none; display: block; }
.i16 { width: 16px; height: 16px; flex: none; }
.i12 { width: 12px; height: 12px; flex: none; }

/* title bar */
.title-bar {
  display: flex;
  align-items: center;
  flex: none;
  height: 23px;
  padding-left: 2px;
  background: #fff;
}
.title-bar h1 { flex: 1; margin: 0 0 0 5px; font: 12px/16px Inter, "Noto Sans CJK SC", sans-serif; }
.win-controls { display: flex; }
.win-controls button { width: 46px; height: 20px; }
.win-controls svg { width: 10px; height: 10px; fill: none; stroke: #000; }

/* menu */
.menu-row { display: flex; flex: none; height: 31px; gap: 5px; padding-bottom: 2px; }
.menu { display: flex; align-items: center; gap: 11px; width: 937px; padding-left: 7px; overflow: hidden; }
.tip {
  display: flex;
  align-items: center;
  justify-content: center;
  width: 180px;
  background: #f8f8f8;
  color: #117070;
  text-decoration: none;
}
.account { display: flex; flex: 1; align-items: center; gap: 10px; padding: 0 5px; background: linear-gradient(#fafafa, #ececec); }

/* toolbars */
.bars { display: flex; flex: none; height: 30px; gap: 5px; }
.bar {
  display: flex;
  align-items: center;
  gap: 7px;
  padding: 0 4px;
  border-radius: 3px;
  background: linear-gradient(#fdfdfd, #efefef);
}
.bar-file { width: 148px; gap: 8px; padding-right: 0; }
.bar-draw { width: 544px; padding-right: 0; }
.bar-view { flex: 1; padding-left: 3px; }
.bars .bar { padding-bottom: 3px; }
.tool { display: flex; align-items: center; gap: 4px; flex: none; }
.tool.off { color: #777; }
.boxed { height: 23px; padding: 0 1px 0 2px; border: 1px solid #777; }
.boxed + .tool { margin-left: -3px; }
.arr {
  width: 7px;
  height: 4px;
  margin-left: 1px;
  background: currentColor;
  clip-path: polygon(0 0, 100% 0, 50% 100%);
}
.tight .arr { margin-left: -2px; }
.sep { width: 1px; height: 18px; margin: 0 -1px; background: #b4b4b4; flex: none; }
.more { align-self: flex-start; margin-left: auto; font-size: 14px; line-height: 14px; font-weight: 700; }

/* work area */
.work { display: flex; flex: 1; min-height: 0; gap: 6px; }
.nav { display: flex; flex-direction: column; width: 165px; flex: none; gap: 1px; padding-bottom: 1px; }
.nav h2 {
  display: flex;
  align-items: center;
  justify-content: space-between;
  height: 15px;
  margin: 0 0 1px;
  padding-right: 4px;
  background: #0054e3;
  color: #fff;
  font-size: 13px;
  font-weight: 400;
}
.nav h2 svg { width: 26px; height: 13px; fill: none; stroke: #fff; }
.nav-btn { height: 21px; flex: none; border: 1px solid #a0a0a0; background: #f0f0f0; }
.nav-tools {
  display: flex;
  align-items: center;
  gap: 6px;
  height: 25px;
  flex: none;
  margin-top: 2px;
  padding-left: 7px;
  background: linear-gradient(#fff, #ededed);
}
.nav-tools svg { display: block; width: 16px; height: 16px; }
.tree-box { display: flex; flex: 1; min-height: 0; margin: 0 1px 1px 2px; border: 1px solid #828790; background: #fff; }
.tree { flex: 1; min-width: 0; overflow: hidden; }
.group { display: flex; align-items: center; height: 16px; padding-left: 7px; }
.group .i16 { margin: 0 4px 0 7px; }
.chev { width: 9px; height: 9px; fill: none; stroke: #444; stroke-width: 2; }
.closed .chev { stroke: #aaa; }
.leaves { margin-left: 12px; padding-left: 18px; border-left: 1px dotted #888; }
.leaves li, .comp-tree li { display: flex; height: 16px; border-left: 1px dotted #888; }
.leaves li::before, .comp-tree li::before { content: ""; width: 9px; height: 8px; flex: none; border-bottom: 1px dotted #888; }
.leaves li:last-child, .comp-tree li:last-child { border-left-color: transparent; }
.leaves li:last-child::before, .comp-tree li:last-child::before { margin-left: -1px; border-left: 1px dotted #888; }
.leaves button { display: flex; align-items: center; height: 16px; padding: 0 4px 0 1px; }
.leaves .i16 { margin-right: 4px; }
.leaves .current { background: #d9d9d9; }
.scroll { display: flex; flex-direction: column; align-items: center; width: 16px; margin-right: 1px; background: #f0f0f0; }
.scroll svg { width: 9px; height: 17px; flex: none; fill: none; stroke: #505050; stroke-width: 2; }
.track { display: flex; flex-direction: column; flex: 1; width: 100%; justify-content: flex-end; padding-bottom: 42px; }
.thumb { height: 61%; background: #cdcdcd; }

.editor { display: flex; flex: 1; min-width: 0; flex-direction: column; }
.bar-comp { height: 28px; flex: none; margin-right: 3px; }
.bar-comp .sep { margin: 0 -1px; }
.floor { display: flex; align-items: center; gap: 4px; margin-left: -4px; }
.floor + .sep { margin-left: -3px; }
.floor select {
  width: 64px;
  height: 21px;
  padding-left: 4px;
  appearance: none;
  background: linear-gradient(#000, #000) 54px 10px / 5px 1px no-repeat, linear-gradient(#000, #000) 55px 11px / 3px 1px no-repeat, linear-gradient(#000, #000) 56px 12px / 1px 1px no-repeat, #fff;
}
.panes { display: flex; flex: 1; min-height: 0; gap: 5px; }
.components { display: flex; flex-direction: column; width: 184px; flex: none; padding: 3px 0 1px; }
.search { display: flex; height: 27px; padding: 2px 0; background: #fff; }
.search input { width: 158px; height: 24px; padding: 0 2px; border: 1px solid #777; background: #fff; }
.search input::placeholder { color: #777; opacity: 1; }
.search button { display: flex; flex: 1; align-items: center; justify-content: center; }
.comp-tree { flex: 1; padding-top: 1px; border: 1px solid #828790; background: #fff; }
.comp-tree ul { padding-left: 31px; }
.comp-tree li::before { width: 8px; }
.comp-tree li button { display: flex; align-items: center; gap: 6px; padding: 0 4px; }
.comp-tree .picked { background: #316ac5; }

.props { display: flex; flex-direction: column; flex: 1; min-width: 0; padding: 0 3px 1px 0; }
.tabs { display: flex; height: 21px; flex: none; border-bottom: 1px solid #dcdcdc; background: #fff; }
.tab { width: 62px; padding-right: 4px; border-right: 1px solid #dcdcdc; }
.sheet { flex: 1; margin: 3px 2px 2px; padding: 1px 0 0 1px; border: 1px solid #9a9fa8; background: #fff; }
table { width: 369px; table-layout: fixed; border-collapse: separate; border-spacing: 0; }
.c-num { width: 21px; }
.c-name { width: 191px; }
.c-val { width: 126px; }
.c-add { width: 31px; }
th, td { height: 19px; padding: 0 2px; border: solid #c0c0c0; border-width: 0 1px 1px 0; line-height: 16px; overflow: hidden; }
th { padding: 0; background: linear-gradient(#fff, #ececec); font-weight: 400; }
thead th { height: 23px; }
thead .hot { background: linear-gradient(#fbdb9c, #f0bd58); color: #5c0a5c; }
tbody th { font-family: "Liberation Sans", sans-serif; font-size: 11px; }
td:nth-child(2) { padding-left: 20px; }
td:last-child { padding: 0; text-align: center; }
td svg { width: 10px; height: 10px; margin: 0 1px; fill: none; stroke: #000; vertical-align: middle; }
td input {
  display: block;
  width: 13px;
  height: 13px;
  margin: 0 auto;
  appearance: none;
  border: 1px solid #333;
  background: #fff;
}
.key { color: #00f; }
.sel th { background: #ffd48a; color: #5c0a5c; }
.sel td:nth-child(2) { background: #0078d7; color: #fff; }
.sel td:nth-child(3) { background: #d9ebf9; }
.style-row td { color: #888; }
.style-row td:nth-child(2) { padding-left: 2px; }
.style-row button { width: 13px; height: 13px; margin-right: 5px; border: 1px solid #aaa; line-height: 0; vertical-align: middle; }
.style-row button svg { width: 7px; height: 7px; margin: 0; vertical-align: top; }

/* status bar */
.status { display: flex; height: 22px; flex: none; gap: 2px; padding: 2px 0 0; background: #fafafa; }
.status span { padding: 0 2px; border: 1px solid #d0d0d0; background: linear-gradient(#fff, #f0f0f0); line-height: 18px; overflow: hidden; }
.s-a { width: 148px; }
.s-b { width: 78px; }
.s-c { width: 98px; }
.s-d { width: 46px; }
.s-e { flex: 1; }
.s-f { width: 71px; }

/* taskbar */
.taskbar { display: flex; height: 40px; flex: none; background: #020c10; color: #fff; }
.start { width: 48px; flex: none; background: #000; }
.start svg { width: 16px; height: 16px; vertical-align: middle; }
.cortana { display: flex; align-items: center; width: 343px; flex: none; padding: 0 12px 0 8px; background: #333; }
.ring { width: 23px; height: 23px; }
.cortana input { flex: 1; min-width: 0; padding-left: 5px; font-size: 14px; }
.cortana input::placeholder { color: #a0a0a0; opacity: 1; }
.mic { width: 14px; height: 18px; }
.slot { width: 51px; flex: none; line-height: 0; }
.slot svg { width: 24px; height: 24px; }
.slot .wide { width: 30px; height: 28px; }
.slot.app { width: 45px; }
.slot.pale { color: #eee; }
.open { background: linear-gradient(#76b9ed, #76b9ed) center bottom / 34px 2px no-repeat; }
.active { background-color: #34444b; background-size: 100% 2px; }
.tray { display: flex; flex: 1; min-width: 0; align-items: center; gap: 8px; padding: 0 4px 0 13px; }
.two-line { display: flex; flex-direction: column; align-items: center; line-height: 18px; width: 52px; margin-left: 11px; }
.kbd { width: 24px; height: 16px; }
.tray .two-line + .i16 { margin-left: 8px; }
.ime { margin: 0 3px; }
.tray .clock { width: 54px; margin-left: 12px; }
.notes { position: relative; margin-left: 14px; width: 36px; height: 40px; border-right: 1px solid #555; }
.notes svg { width: 16px; height: 16px; margin-top: 12px; }
.notes b { position: absolute; left: 6px; top: 19px; width: 16px; height: 16px; border-radius: 8px; background: #444; font-size: 11px; line-height: 16px; text-align: center; }

/* floating overlays */
.ime-bar {
  position: absolute;
  left: 750px;
  top: 14px;
  display: flex;
  align-items: center;
  gap: 6px;
  height: 24px;
  width: 193px;
  padding-right: 4px;
  border: 1px solid #b4c7dc;
  background: #fff;
  color: #2178c8;
  font-size: 15px;
}
.ime-bar .logo { width: 28px; height: 28px; flex: none; margin: 0 0 2px -15px; }
.ball {
  position: absolute;
  left: 1008px;
  top: -29px;
  width: 48px;
  height: 48px;
  border: 2px solid #ddd;
  border-radius: 50%;
  background: #3ec45c;
  box-shadow: inset 0 0 0 1px #249a42, 0 1px 2px #777;
  color: #fff;
  font-weight: 700;
  line-height: 70px;
  text-align: center;
}
.mark { position: absolute; left: 502px; top: 99px; width: 197px; height: 241px; border: 7px solid #f00; }
```
